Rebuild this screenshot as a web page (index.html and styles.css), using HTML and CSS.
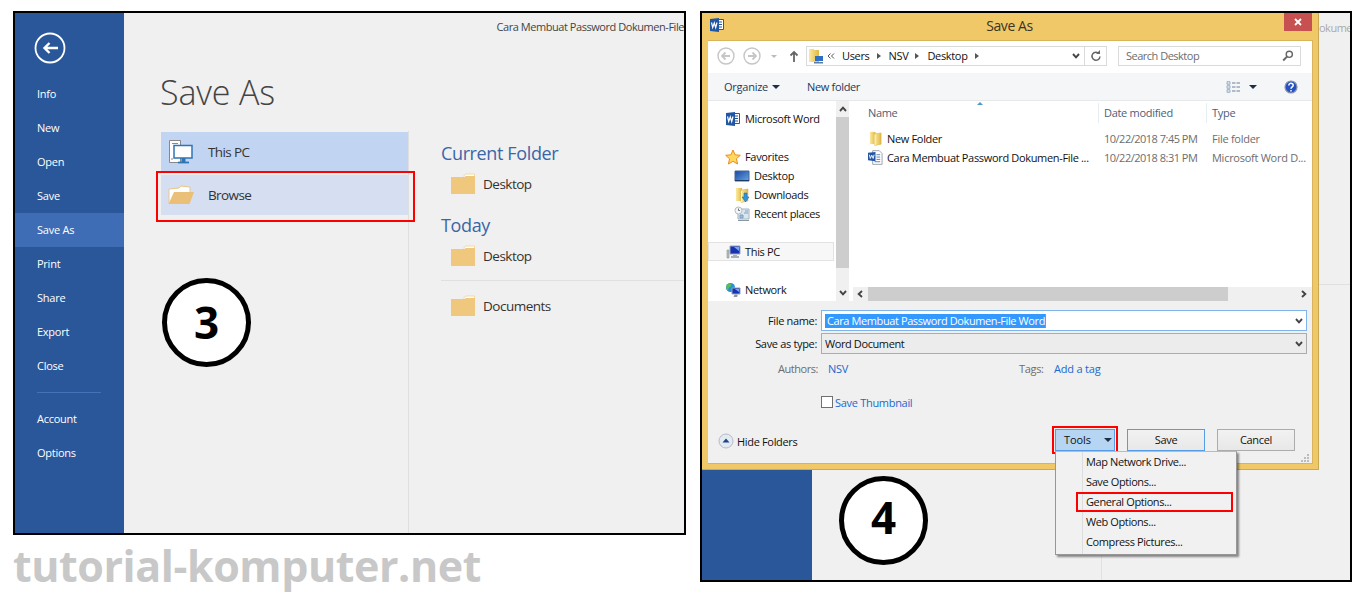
FILE: index.html
```html
<!DOCTYPE html>
<html lang="en">
<head>
<meta charset="utf-8">
<title>tutorial-komputer.net</title>
<link rel="stylesheet" href="styles.css">
</head>
<body>
<svg width="0" height="0" class="defs">
  <defs>
    <linearGradient id="gold" x1="0" x2="1"><stop offset="0" stop-color="#fbeaa0"/><stop offset="1" stop-color="#e0b843"/></linearGradient>
    <linearGradient id="screen" x1="0" y1="0" x2="1" y2="1"><stop offset="0" stop-color="#1848a0"/><stop offset="1" stop-color="#6aa4e4"/></linearGradient>
    <symbol id="folder" viewBox="0 0 26 24"><path d="M13 4.500 16 2h8.500v4" fill="#fff" stroke="#f3d9a4"/><path d="M1 5h13l2-1h9v18H1z" fill="#efc87e"/></symbol>
    <symbol id="word" viewBox="0 0 16 16"><path d="M8 2.500h6.500v10H8z" fill="#fff" stroke="#2b579a"/><path d="M9 5h4M9 7.500h4M9 10h4" stroke="#2b579a"/><path d="M1 2 10 1v14L1 14z" fill="#2156a5"/><path d="m2.500 5.500 1.200 5L5.300 6l1.400 4.500 1.300-5" fill="none" stroke="#fff" stroke-width="1.200"/></symbol>
    <symbol id="winfolder" viewBox="0 0 16 16"><path d="M2 1h6v13H2z" fill="url(#gold)"/><path d="M7 3l7-1v12l-7 1.500z" fill="url(#gold)" stroke="#d9ae3c" stroke-width=".5"/><path d="M7.500 4v11" stroke="#fff6c8"/></symbol>
    <symbol id="chev" viewBox="0 0 8 6"><path d="m1 1 3 3.300L7 1" fill="none" stroke="#444" stroke-width="1.900"/></symbol>
  </defs>
</svg>
<div class="page">
  <div class="left">
    <section class="panel word">
      <nav class="side">
        <svg class="back" viewBox="0 0 32 32"><circle cx="16" cy="16" r="14.500" fill="none" stroke="#fff" stroke-width="1.800"/><path d="M24 16H10M15.500 11 10.500 16l5 5" fill="none" stroke="#fff" stroke-width="2.400"/></svg>
        <ul class="menu-list">
          <li>Info</li><li>New</li><li>Open</li><li>Save</li><li class="active">Save As</li><li>Print</li><li>Share</li><li>Export</li><li>Close</li>
        </ul>
        <hr>
        <ul class="menu-list"><li>Account</li><li>Options</li></ul>
      </nav>
      <div class="main">
        <div class="doc-title">Cara Membuat Password Dokumen-File</div>
        <h1>Save As</h1>
        <div class="columns">
          <div class="places">
            <div class="place pc">
              <svg viewBox="0 0 26 26"><path d="M1.500 1.500h11v22h-11z" fill="#fff" stroke="#888"/><path d="M4 4.500h6M3 20h2" stroke="#888"/><path d="M6 6.500h18V19H6z" fill="#fff" stroke="#2e75b6" stroke-width="1.500"/><path d="M15.500 19v4" stroke="#2e75b6" stroke-width="4"/><path d="M10 23.500h11" stroke="#2e75b6" stroke-width="1.800"/></svg>
              <span>This PC</span>
            </div>
            <div class="place browse">
              <svg viewBox="0 0 26 26"><path d="M1 21V7l10-1 2-2 9 1v6" fill="#fff" stroke="#eac58a"/><path d="M6 10h20l-4.500 12H.5z" fill="#eabf78"/></svg>
              <span>Browse</span>
              <i class="mark"></i>
            </div>
          </div>
          <div class="recent">
            <h2>Current Folder</h2>
            <div class="row"><svg><use href="#folder"/></svg><span>Desktop</span></div>
            <h2 class="today">Today</h2>
            <div class="row"><svg><use href="#folder"/></svg><span>Desktop</span></div>
            <div class="row last"><svg><use href="#folder"/></svg><span>Documents</span></div>
          </div>
        </div>
      </div>
      <div class="badge three">3</div>
    </section>
    <div class="site">tutorial-komputer.net</div>
  </div>

  <section class="panel second">
    <div class="behind-side"></div>
    <div class="behind-mid"></div>
    <div class="behind-right"><div class="cut">okume</div></div>
    <div class="badge four">4</div>

    <div class="dialog">
      <header class="titlebar">
        <svg class="app"><use href="#word"/></svg>
        <span class="t-title">Save As</span>
        <b class="close"><svg viewBox="0 0 8 8"><path d="m1 1 6 6M7 1 1 7" stroke="#fff" stroke-width="1.800"/></svg></b>
      </header>
      <div class="body">
        <div class="address">
          <svg class="hist" viewBox="0 0 70 20"><g fill="none" stroke="#c6c6c6" stroke-width="1.400"><circle cx="10" cy="10" r="8"/><circle cx="36" cy="10" r="8"/><path d="M14 10H6M9.500 6.500 6 10l3.500 3.500M32 10h8M36.500 6.500 40 10l-3.500 3.500" stroke-width="1.800"/></g><path d="M55 9h6l-3 3z" fill="#bbb"/></svg>
          <svg class="up" viewBox="0 0 10 12"><path d="M5 12V2M1.500 5.500 5 2l3.500 3.500" fill="none" stroke="#666" stroke-width="1.800"/></svg>
          <div class="path">
            <svg class="pf" viewBox="0 0 16 16"><path d="M1 1h5v13H1zM6 2h5v12H6z" fill="url(#gold)"/><path d="M7 8h8v5H7z" fill="#2f6fc4"/><path d="M6 14h9v1.500H6z" fill="#5a7ca8"/></svg>
            <svg class="dbl" viewBox="0 0 8 6"><path d="M3.500.5 1 3l2.500 2.500M7 .5 4.500 3 7 5.500" fill="none" stroke="#555"/></svg>
            <span>Users</span><i></i><span>NSV</span><i></i><span>Desktop</span><i></i>
            <svg class="chev"><use href="#chev"/></svg>
            <div class="refresh"><svg viewBox="0 0 12 12"><path d="M9 3.500A4 4 0 1 0 10 6.500" fill="none" stroke="#666" stroke-width="1.500"/><path d="M6 4h4V0z" fill="#666"/></svg></div>
          </div>
          <div class="search"><span>Search Desktop</span><svg viewBox="0 0 12 12"><circle cx="7.300" cy="4.300" r="3.100" fill="none" stroke="#666" stroke-width="1.400"/><path d="M5 6.700 1.200 10.500" stroke="#666" stroke-width="1.900"/></svg></div>
        </div>
        <div class="toolbar">
          <span class="organize">Organize</span><i class="tri"></i><span class="newf">New folder</span>
          <svg class="views" viewBox="0 0 15 12"><g fill="#dce8f4" stroke="#8ba3bd" stroke-width=".8"><path d="M1 .7h3v2.600H1zM1 4.700h3v2.600H1zM1 8.700h3v2.600H1z"/></g><path d="M6 2h3.500M10.500 2H14M6 6h3.500M10.500 6H14M6 10h3.500M10.500 10H14" stroke="#6e7f96" stroke-width="1.200"/></svg>
          <i class="tri t2"></i>
          <svg class="help" viewBox="0 0 14 14"><circle cx="7" cy="7" r="6" fill="#2451c4" stroke="#8c96a8" stroke-width="1.200"/><path d="M4.800 5.400c0-3 4.600-2.600 4.400 0C9.100 7 7 6.900 7 8.800M7 10v1.500" fill="none" stroke="#fff" stroke-width="1.500"/></svg>
        </div>
        <div class="explorer">
          <div class="tree">
            <div class="node n-word"><svg><use href="#word"/></svg><span>Microsoft Word</span></div>
            <div class="node"><svg viewBox="0 0 16 16"><path d="m8 1 2.100 4.800 5.200.5-3.900 3.500 1.200 5.200L8 12.300 3.400 15l1.200-5.200L.7 6.300l5.200-.5z" fill="#ffd95c" stroke="#ee8a1d"/></svg><span>Favorites</span></div>
            <div class="node sub"><svg viewBox="0 0 16 16"><path d="M1 3h14v10H1z" fill="url(#screen)" stroke="#41648f"/><path d="M1 12.500h14" stroke="#1c3c66"/></svg><span>Desktop</span></div>
            <div class="node sub"><svg viewBox="0 0 16 16"><use href="#winfolder"/><path d="M10 6h3v4h2l-3.500 5L8 10h2z" fill="#2e94de" stroke="#1667ae" stroke-width=".5"/></svg><span>Downloads</span></div>
            <div class="node sub"><svg viewBox="0 0 16 16"><path d="M4 3h11v10H4z" fill="#dbe7f0" stroke="#a5b1bc"/><path d="M6 9h3v3H6zM11 5h3M10 7h4" fill="#9cc0dd" stroke="#7ba0c0"/><circle cx="4.500" cy="4.500" r="3.500" fill="#f3f5f6" stroke="#b4bcc2"/><path d="M4.500 2.500v2H6" fill="none" stroke="#678"/><path d="M4 14.500h11" stroke="#8796a4"/></svg><span>Recent places</span></div>
            <div class="node pcnode"><svg viewBox="0 0 16 16"><path d="M2 6h2v8H2z" fill="#b5bcb8" stroke="#8e9793" stroke-width=".6"/><path d="M5 2h10v8H5z" fill="#1733b4" stroke="#99a5b6"/><path d="M9 3h5v4z" fill="#78a5f4"/><path d="M8 11h4v1h2v2H6v-2h2z" fill="#a7afb7"/></svg><span>This PC</span></div>
            <div class="node"><svg viewBox="0 0 16 16"><circle cx="5.500" cy="5.500" r="4.500" fill="#278fd6"/><path d="M2 2.500c4-3 6 1 3 2.500S4 9 3 8.500 0 5 2 2.500z" fill="#58be5d"/><path d="M7 6h8v6H7z" fill="#1733b4" stroke="#90a1bb"/><path d="M10 7h4v3z" fill="#7ba5f1"/><path d="M10 13h2v1.500H9z" fill="#8b969f" stroke="#8b969f"/></svg><span>Network</span></div>
          </div>
          <div class="vbar"><svg class="flip"><use href="#chev"/></svg><b></b><svg><use href="#chev"/></svg></div>
          <div class="files">
            <div class="frow head"><span class="h-name">Name</span><span class="h-date">Date modified</span><span class="h-type">Type</span>
              <svg class="sort" viewBox="0 0 6 3"><path d="M0 3 3 0l3 3z" fill="#4d9ac6"/></svg></div>
            <div class="frow first"><span class="f"><svg><use href="#winfolder"/></svg><em>New Folder</em></span><span class="d">10/22/2018 7:45 PM</span><span class="ty">File folder</span></div>
            <div class="frow"><span class="f"><svg viewBox="0 0 16 16"><path d="M5 .7h7l3 3v11.600H5z" fill="#fff" stroke="#9a9fa8"/><path d="M9 5h4M9 7.500h4M9 10h4M7 12.500h6" stroke="#5c7cac"/><path d="M0 3 8 2v10l-8-1z" fill="#2156a5"/><path d="m1.500 5 1 4L4 5.500 5.500 9l1-4" fill="none" stroke="#fff"/></svg><em>Cara Membuat Password Dokumen-File ...</em></span><span class="d">10/22/2018 8:31 PM</span><span class="ty">Microsoft Word D...</span></div>
            <div class="hbar"><svg class="lft"><use href="#chev"/></svg><b></b><svg class="rgt"><use href="#chev"/></svg></div>
          </div>
        </div>
        <div class="form">
          <div class="field"><label>File name:</label><div class="input name"><mark>Cara Membuat Password Dokumen-File Word</mark><svg><use href="#chev"/></svg></div></div>
          <div class="field"><label>Save as type:</label><div class="input type"><span>Word Document</span><svg><use href="#chev"/></svg></div></div>
          <div class="meta"><span class="au">Authors:</span><a class="nsv">NSV</a><span class="tg">Tags:</span><a class="tag">Add a tag</a></div>
          <div class="thumb"><i></i><a>Save Thumbnail</a></div>
          <div class="actions">
            <svg class="hide" viewBox="0 0 16 16"><circle cx="8" cy="8" r="7" fill="#e4eaf1" stroke="#b3bcc7"/><path d="m4.500 9.500 3.500-4 3.500 4z" fill="#1f4384"/></svg>
            <span class="hf">Hide Folders</span>
            <div class="btn tools"><span>Tools</span><i class="tri"></i></div>
            <div class="btn save">Save</div>
            <div class="btn cancel">Cancel</div>
          </div>
          <svg class="grip" viewBox="0 0 8 8"><path d="M6 0h2v2H6zM3 3h2v2H3zM6 3h2v2H6zM0 6h2v2H0zM3 6h2v2H3zM6 6h2v2H6z" fill="#bcbcbc"/></svg>
        </div>
      </div>
    </div>
    <div class="dropdown">
      <div>Map Network Drive...</div><div>Save Options...</div><div class="marked">General Options...</div><div>Web Options...</div><div>Compress Pictures...</div>
    </div>
  </section>
</div>
</body>
</html>
```
FILE: styles.css
```css
* { box-sizing: border-box; }
body { margin: 0; background: #fff; font-family: "Open Sans", "Noto Sans", sans-serif; overflow: hidden; }
.defs { position: absolute; }
svg { display: block; flex: none; }
i, em { font-style: normal; }
ul { list-style: none; margin: 0; padding: 0; }
span, a, em, label { white-space: nowrap; }
.page { display: flex; gap: 14px; width: 1366px; height: 596px; padding: 11px 0 0 13px; }
.left { width: 673px; }
.panel { position: relative; border: 2px solid #000; background: #f0f0f0; overflow: hidden; display: flex; }
.word { height: 524px; }

/* Backstage */
.side { width: 109px; background: #2a579a; color: #fff; font-size: 11px; padding-top: 19px; }
.back { width: 32px; height: 32px; margin: 0 0 13px 19px; }
.menu-list li { height: 34px; line-height: 34px; padding-left: 22px; letter-spacing: -.25px; }
.menu-list .active { background: #3e6db5; }
.side hr { width: 64px; height: 1px; border: 0; background: #4472b8; margin: 9px 0 9px 22px; }
.main { flex: 1; display: flex; flex-direction: column; }
.doc-title { align-self: flex-end; font-size: 11px; line-height: 16px; margin-top: 6px; white-space: nowrap; color: #444; letter-spacing: -.45px; }
h1 { margin: 32px 0 0 36px; height: 50px; line-height: 50px; font-size: 34px; font-weight: 300; color: #444; letter-spacing: -.15px; }
.columns { flex: 1; display: flex; margin: 14px 0 0 37px; }
.places { width: 248px; border-right: 1px solid #dfdfdf; padding-top: 1px; display: flex; flex-direction: column; gap: 4px; }
.place { position: relative; height: 39px; display: flex; align-items: center; font-size: 13.5px; color: #333; letter-spacing: -.6px; }
.place svg { width: 26px; height: 26px; margin: 0 14px 0 7px; }
.pc { background: #c1d4f1; }
.browse { background: #d5dff1; height: 40px; }
.mark { position: absolute; left: -5px; top: -4px; width: 259px; height: 51px; border: 2px solid #f00; z-index: 2; }
.recent { flex: 1; padding: 10px 0 0 32px; }
h2 { font-size: 18px; font-weight: 400; line-height: 24px; height: 24px; margin: 0; color: #3a66a7; white-space: nowrap; letter-spacing: -.37px; }
.today { margin-top: 11px; }
.row { display: flex; align-items: center; height: 37px; padding: 1px 0 0 9px; font-size: 13.5px; color: #333; letter-spacing: -.5px; }
.row svg { width: 26px; height: 24px; margin-right: 7px; }
.last { height: 50px; margin-top: 6px; border-top: 1px solid #e0e0e0; }
.badge { position: absolute; width: 89px; height: 89px; border: 5px solid #000; border-radius: 50%; background: #fff; color: #000; text-align: center; font-weight: 700; font-size: 44px; line-height: 79px; letter-spacing: 0; }
.three { left: 147px; top: 265px; }
.four { left: 137px; top: 463px; line-height: 72px; }
.site { font-weight: 700; font-size: 43px; line-height: 56px; margin-top: 3px; color: #c8c8c8; white-space: nowrap; letter-spacing: -.43px; }

/* Second window behind the dialog */
.second { width: 652px; height: 571px; color: #111; font-size: 11px; letter-spacing: -.33px; }
.behind-side { flex: none; width: 110px; background: #2a579a; }
.behind-mid { flex: none; width: 290px; border-right: 1px solid #e2e2e2; }
.behind-right { flex: 1; min-width: 0; height: 272px; border-bottom: 1px solid #e0e0e0; }
.cut { margin: 7px 0 0 217px; color: #aaa; letter-spacing: -.5px; }

/* Dialog */
.dialog { position: absolute; left: 0; top: 0; width: 617px; height: 457px; background: #f0c868; border-right: 1px solid #c9a856; border-bottom: 1px solid #c9a856; padding: 0 6px; }
.titlebar { display: flex; height: 27px; align-items: center; }
.app { width: 16px; height: 16px; margin: 0 0 3px 1px; }
.t-title { flex: 1; text-align: center; font-size: 14px; line-height: 20px; color: #3c3423; padding: 0 0 1px 10px; letter-spacing: -.4px; }
.close { align-self: flex-start; width: 28px; height: 18px; background: #c75050; display: flex; align-items: center; justify-content: center; }
.close svg { width: 8px; height: 8px; }
.body { height: 424px; width: 605px; background: #f0f0f0; border: 1px solid #d9b45c; border-left: 0; display: flex; flex-direction: column; }
.address { height: 32px; background: #fff; display: flex; align-items: center; padding-bottom: 2px; }
.hist { width: 70px; height: 20px; margin-left: 8px; }
.up { width: 10px; height: 12px; margin: 0 7px 0 3px; }
.path { width: 301px; height: 20px; border: 1px solid #dadada; display: flex; align-items: center; padding-left: 1px; }
.path span, .search span { padding-bottom: 1px; }
.pf { width: 16px; height: 16px; }
.dbl { width: 8px; height: 6px; margin: 0 7px 0 3px; }
.path i { border: solid transparent; border-width: 3px 0 3px 4px; border-left-color: #555; margin: 0 8px 0 7px; }
.path .chev { width: 8px; height: 6px; margin: 0 4px 0 auto; }
.refresh { width: 22px; height: 18px; border-left: 1px solid #dadada; display: flex; align-items: center; justify-content: center; }
.refresh svg { width: 12px; height: 12px; }
.search { width: 183px; height: 20px; margin-left: 11px; border: 1px solid #dadada; display: flex; justify-content: space-between; align-items: center; padding: 0 6px 0 7px; color: #6d6d6d; letter-spacing: -.5px; }
.search svg { width: 12px; height: 12px; }
.toolbar { height: 28px; background: #f5f6f7; border-bottom: 1px solid #e6e8ea; display: flex; align-items: center; padding-left: 16px; color: #1e395b; }
.organize { letter-spacing: -.25px; }
.tri { border: solid transparent; border-width: 4px 4px 0; border-top-color: #1e2f45; margin-left: 4px; }
.newf { margin-left: 27px; }
.views { width: 15px; height: 12px; margin-left: auto; }
.t2 { margin: 0 27px 0 8px; }
.help { width: 14px; height: 14px; margin-right: 14px; }
.explorer { height: 200px; background: #fff; display: flex; }
.tree { width: 128px; overflow: hidden; }
.node { height: 19px; display: flex; align-items: center; padding-left: 17px; margin-bottom: 19px; }
.node svg { width: 16px; height: 16px; margin-right: 4px; }
.n-word { margin-top: 8px; }
.node:nth-child(2) { margin-bottom: 0; }
.sub { padding-left: 26px; margin-bottom: 0; }
.pcnode { margin-top: 19px; width: 126px; background: #f7f7f7; outline: 1px solid #e3e3e3; outline-offset: -1px; }
.vbar { width: 13px; background: #f0f0f0; display: flex; flex-direction: column; align-items: center; }
.vbar svg, .hbar svg { width: 8px; height: 6px; }
.vbar svg { margin: 5px 0; }
.vbar b { width: 13px; height: 152px; background: #cdcdcd; margin-bottom: 17px; }
.flip { transform: rotate(180deg); }
.files { flex: 1; margin-left: 4px; display: flex; flex-direction: column; }
.frow { position: relative; display: grid; grid-template-columns: 245px 108px 1fr; height: 19px; align-items: center; color: #6d6d6d; }
.head { height: 24px; color: #4c607a; }
.head span { height: 20px; line-height: 19px; padding-left: 5px; }
.head .h-name { padding-left: 15px; }
.h-date, .h-type { border-left: 1px solid #e6edf3; letter-spacing: -.3px; }
.sort { position: absolute; width: 6px; height: 3px; left: 124px; top: 1px; }
.first { margin-top: 4px; }
.f { display: flex; align-items: center; padding-left: 15px; color: #111; }
.f svg { width: 15px; height: 15px; margin-right: 4px; }
.ty { padding-left: 6px; letter-spacing: -.27px; }
.d { letter-spacing: -.5px; padding-left: 6px; }
.hbar { height: 14px; margin-top: auto; background: #f0f0f0; display: flex; align-items: center; }
.hbar b { width: 360px; height: 14px; background: #cdcdcd; margin: 0 auto 0 4px; }
.lft { transform: rotate(90deg); margin-left: 3px; }
.rgt { transform: rotate(-90deg); margin-right: 4px; }
.form { position: relative; flex: 1; padding-top: 9px; }
.field { display: flex; align-items: center; margin-bottom: 2px; }
.field label { width: 109px; text-align: right; margin-right: 4px; }
.input { width: 486px; height: 21px; background: #fff; border: 1px solid #7eb4ea; display: flex; align-items: center; justify-content: space-between; padding: 0 3px; }
.input svg { width: 8px; height: 6px; }
.type { background: #ececec; border-color: #acacac; }
.type span { letter-spacing: -.4px; }
.input mark { background: #3399ff; color: #fff; line-height: 14px; border-right: 1px solid #e08030; white-space: nowrap; padding: 0 0 0 2px; letter-spacing: -.4px; }
.meta { display: flex; height: 25px; align-items: center; color: #6d6d6d; }
.au { width: 110px; text-align: right; letter-spacing: -.45px; }
a { color: #1a69cf; }
.nsv { margin-left: 10px; width: 191px; }
.tg { width: 25px; }
.tag { margin-left: 10px; letter-spacing: -.2px; }
.thumb { display: flex; align-items: center; margin: 12px 0 0 113px; height: 18px; }
.thumb i { width: 12px; height: 12px; border: 1px solid #707070; background: #fff; margin-right: 2px; }
.thumb a { letter-spacing: -.3px; }
.actions { display: flex; align-items: center; margin: 17px 17px 0 10px; height: 23px; }
.hide { width: 16px; height: 16px; margin: 2px 3px 0 0; }
.hf { padding-top: 4px; }
.btn { height: 22px; border: 1px solid #acacac; background: linear-gradient(#f2f2f2, #e8e8e8); width: 78px; text-align: center; line-height: 20px; margin-left: 12px; }
.tools { width: 60px; background: #b5d5f3; border-color: #569de5; margin-left: auto; display: flex; align-items: center; justify-content: space-between; padding: 0 2px 0 8px; outline: 2px solid #f00; outline-offset: 1px; letter-spacing: -.1px; }
.save { border-color: #569de5; }
.grip { position: absolute; right: 3px; bottom: 1px; width: 8px; height: 8px; }
.dropdown { position: absolute; left: 353px; top: 438px; width: 182px; height: 104px; padding: 0 3px 0 20px; background: linear-gradient(90deg, transparent 26px, #ddd 26px, #ddd 27px, transparent 27px) #f1f1f1; border: 1px solid #979797; border-top-color: #bbb; box-shadow: 2px 2px 2px rgba(0,0,0,.45); letter-spacing: -.39px; }
.dropdown div { height: 20px; line-height: 20px; padding-left: 10px; white-space: nowrap; }
.dropdown .marked { outline: 2px solid #f00; outline-offset: -2px; }
```
